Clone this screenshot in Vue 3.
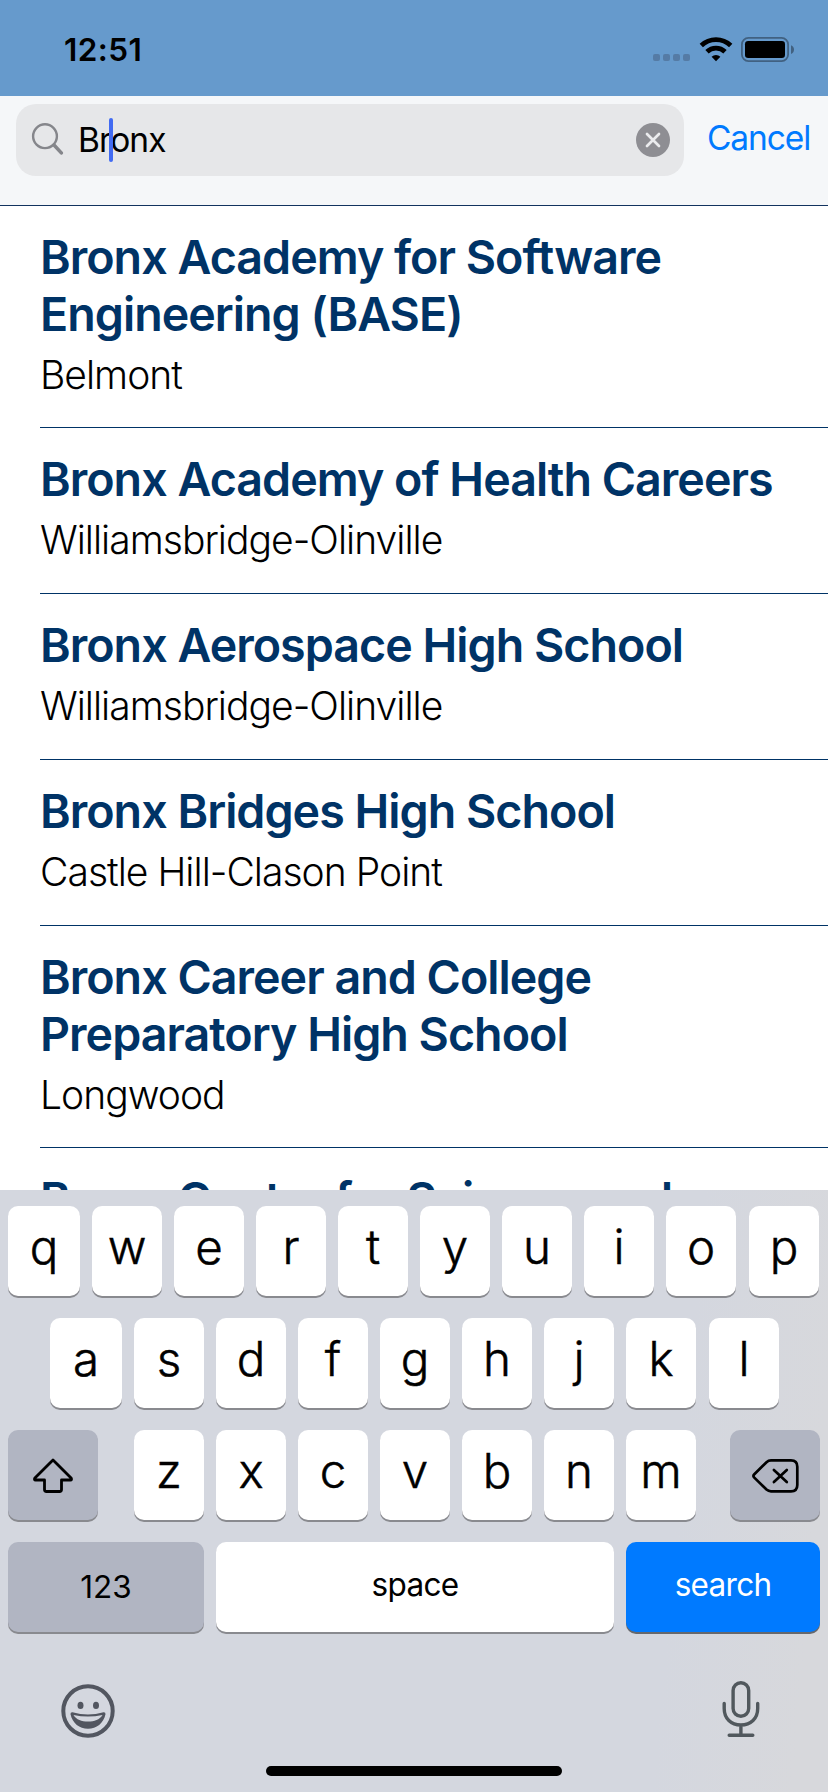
<script setup>
const schools = [
  { lines: ['Bronx Academy for Software', 'Engineering (BASE)'], area: 'Belmont' },
  { lines: ['Bronx Academy of Health Careers'], area: 'Williamsbridge-Olinville' },
  { lines: ['Bronx Aerospace High School'], area: 'Williamsbridge-Olinville' },
  { lines: ['Bronx Bridges High School'], area: 'Castle Hill-Clason Point' },
  { lines: ['Bronx Career and College', 'Preparatory High School'], area: 'Longwood' },
  { lines: ['Bronx Center for Science and'] }
]
const topRow = [...'qwertyuiop']
const homeRow = [...'asdfghjkl']
const lowRow = [...'zxcvbnm']
</script>

<template>
  <div class="phone">
    <header class="status">
      <span class="time">12:51</span>
      <div class="indicators">
        <div class="dots"><i v-for="n in 4" :key="n"></i></div>
        <svg class="wifi" width="34" height="26" viewBox="699 36 34 26">
          <g fill="none" stroke="#000" stroke-width="4.8">
            <path d="M701.3 45.6A21.3 21.3 0 0 1 730.7 45.6" />
            <path d="M707 51.7A13 13 0 0 1 725 51.7" />
          </g>
          <path d="M716 61.2L711.6 56.7A6.5 6.5 0 0 1 720.4 56.7Z" />
        </svg>
        <svg class="battery" width="54" height="26" viewBox="741 37 54 26">
          <rect x="741.9" y="37.9" width="46.2" height="23.2" rx="6.5" fill="none" stroke="#416181" stroke-width="1.8" />
          <rect x="745" y="41" width="40" height="17" rx="3.2" />
          <path d="M791 45.2C795 46.5 795 52.7 791 54Z" fill="#416181" />
        </svg>
      </div>
    </header>

    <div class="searchbar">
      <div class="field">
        <svg class="glass" width="34" height="34" viewBox="30 121 34 34" fill="none" stroke="#85868b" stroke-linecap="round">
          <circle cx="45" cy="136.2" r="11.9" stroke-width="2.4" />
          <path d="M54 145L61.3 152.9" stroke-width="3.5" />
        </svg>
        <span class="query">Bronx<i class="caret"></i></span>
        <svg class="clear" width="34" height="34" viewBox="0 0 34 34">
          <circle cx="17" cy="17" r="17" fill="#8e8e93" />
          <path d="M11 11L23 23M23 11L11 23" stroke="#ebecee" stroke-width="2.7" stroke-linecap="round" />
        </svg>
      </div>
      <span class="cancel">Cancel</span>
    </div>

    <main class="results">
      <article v-for="s in schools" :key="s.lines[0]" class="school">
        <h2><span v-for="l in s.lines" :key="l">{{ l }}</span></h2>
        <p v-if="s.area">{{ s.area }}</p>
      </article>
    </main>

    <section class="keyboard">
      <div class="row">
        <span v-for="k in topRow" :key="k" class="key">{{ k }}</span>
      </div>
      <div class="row home-row">
        <span v-for="k in homeRow" :key="k" class="key">{{ k }}</span>
      </div>
      <div class="row low-row">
        <span class="key dark side">
          <svg width="46" height="42" viewBox="31 1455 46 42" fill="none" stroke="#000" stroke-width="2.8" stroke-linejoin="round">
            <path d="M54 1459.9L72.3 1478.3Q73 1480 71.5 1480H62.5V1489.5Q62.5 1491.5 60.5 1491.5H47.5Q45.5 1491.5 45.5 1489.5V1480H36.5Q35 1480 35.7 1478.3Z" />
          </svg>
        </span>
        <div class="letters">
          <span v-for="k in lowRow" :key="k" class="key">{{ k }}</span>
        </div>
        <span class="key dark side">
          <svg width="50" height="38" viewBox="750 1457 50 38" fill="none" stroke="#000" stroke-width="2.7" stroke-linecap="round" stroke-linejoin="round">
            <path d="M771 1460.4H791Q797.3 1460.4 797.3 1466.7V1485Q797.3 1491.3 791 1491.3H771Q768.5 1491.3 766.5 1489.5L754.3 1477.6Q752.6 1475.9 754.3 1474.2L766.5 1462.2Q768.5 1460.4 771 1460.4Z" />
            <path d="M773.9 1470L786.8 1482M786.8 1470L773.9 1482" />
          </svg>
        </span>
      </div>
      <div class="row">
        <span class="key dark word num">123</span>
        <span class="key word space">space</span>
        <span class="key word go">search</span>
      </div>
      <div class="dock">
        <svg width="56" height="56" viewBox="59.5 1683.3 56 56">
          <circle cx="87.5" cy="1711.3" r="24.7" fill="none" stroke="#525660" stroke-width="4" />
          <ellipse cx="80" cy="1705.7" rx="3" ry="3.6" fill="#525660" />
          <ellipse cx="95.5" cy="1705.7" rx="3" ry="3.6" fill="#525660" />
          <path d="M72 1712.6Q87.5 1717 103 1712.6Q105.2 1712.4 105 1714.5C103 1723.5 96 1729 87.5 1729S72 1723.5 70 1714.5Q69.8 1712.4 72 1712.6Z" fill="#525660" />
          <path d="M73 1715.2Q87.5 1718.5 102 1715.2C99 1720 94 1721.8 87.5 1721.8S76 1720 73 1715.2Z" fill="#d4d7df" />
        </svg>
        <svg width="42" height="60" viewBox="719.5 1679 42 60" fill="none" stroke="#51585d" stroke-width="3.4" stroke-linecap="round">
          <rect x="732.6" y="1682.7" width="15.6" height="33.6" rx="7.8" />
          <path d="M723.7 1703.5V1708.5C723.7 1718.5 730.5 1725 740.4 1725S757.2 1718.5 757.2 1708.5V1703.5M740.4 1725V1735M728.7 1735.2H752.3" />
        </svg>
      </div>
      <div class="home-bar"></div>
    </section>
  </div>
</template>

<style>
body { margin: 0; background: #fff; }
</style>

<style scoped>
* { box-sizing: border-box; }
.phone {
  width: 828px;
  height: 1792px;
  display: flex;
  flex-direction: column;
  overflow: hidden;
  background: #fff;
  color: #000;
  font-family: Inter, "Liberation Sans", sans-serif;
}
svg { display: block; flex: none; }
.status {
  height: 96px;
  flex: none;
  background: #669acc;
  display: flex;
  justify-content: space-between;
  padding: 30px 33px 0 64px;
}
.time { font-size: 31.5px; font-weight: 600; line-height: 40px; letter-spacing: 0.4px; }
.indicators { display: flex; align-items: flex-start; }
.dots { display: flex; gap: 3px; margin: 24px 9px 0 0; }
.dots i { width: 7px; height: 7px; border-radius: 2px; background: #557ba5; }
.wifi { margin: 6px 8px 0 0; }
.battery { margin-top: 7px; }
.searchbar {
  height: 110px;
  flex: none;
  background: #f5f7f9;
  border-bottom: 1px solid #12335f;
  display: flex;
  align-items: flex-start;
  padding: 8px 0 0 16px;
}
.field {
  width: 668px;
  height: 72px;
  flex: none;
  border-radius: 20px;
  background: #e6e7e9;
  display: flex;
  align-items: center;
  padding: 0 14px;
}
.glass { margin-top: -4px; }
.query {
  position: relative;
  flex: 1;
  margin-left: 14px;
  font-size: 33.5px;
  line-height: 44px;
  letter-spacing: -0.9px;
}
.caret {
  position: absolute;
  left: 31px;
  top: 0;
  width: 4px;
  height: 44px;
  border-radius: 2px;
  background: #426bf2;
}
.cancel {
  margin-left: 23px;
  margin-top: 12px;
  font-size: 33.5px;
  line-height: 44px;
  color: #007aff;
  letter-spacing: -1.1px;
}
.results { height: 984px; flex: none; overflow: hidden; padding-left: 40px; }
.school { min-height: 166px; padding: 23px 0 28px; border-bottom: 1px solid #003366; white-space: nowrap; }
h2 { margin: 0; font-size: 46.6px; line-height: 57px; font-weight: 600; color: #003366; letter-spacing: -0.98px; }
h2 span { display: block; }
p { margin: 8px 0 0; font-size: 39px; line-height: 48px; font-weight: 300; letter-spacing: -0.97px; }
.keyboard {
  flex: 1;
  background: linear-gradient(95deg, #d4d7df 80%, #d7d8dc 96%);
  padding: 16px 8px 0;
}
.row { display: flex; gap: 12px; height: 90px; margin-bottom: 22px; }
.row:nth-child(4) { margin-bottom: 0; }
.home-row { padding-left: 42px; }
.key {
  width: 70px;
  height: 90px;
  flex: none;
  border-radius: 10px;
  background: #fff;
  box-shadow: 0 2px 0 #898a8f;
  display: flex;
  align-items: center;
  justify-content: center;
  font-size: 47.5px;
  line-height: 58px;
  font-weight: 300;
  -webkit-text-stroke: 0.5px #000;
  padding-bottom: 9px;
}
.row > .key:first-child { width: 72px; }
.row > .key:nth-child(10), .home-row > .key:last-child { margin-left: 1px; }
.letters { display: flex; gap: 12px; margin-left: 24px; }
.row > .key.side { width: 90px; padding: 2px 0 0; }
.key.side:last-child { margin-left: auto; }
.dark { background: #b1b5c2; }
.word { font-size: 31.5px; font-weight: 400; -webkit-text-stroke: 0; padding-bottom: 5px; letter-spacing: -0.7px; }
.row > .key.num { width: 196px; padding-bottom: 1px; letter-spacing: 0; }
.space { width: 398px; }
.go { width: 194px; background: #007aff; color: #fff; box-shadow: 0 2px 0 #66686d; }
.dock {
  height: 134px;
  display: flex;
  justify-content: space-between;
  padding: 47px 58.5px 0 51.5px;
}
.dock svg:first-child { margin-top: 4.3px; }
.home-bar { width: 296px; height: 10px; border-radius: 5px; background: #000; margin: 0 auto; }
</style>
